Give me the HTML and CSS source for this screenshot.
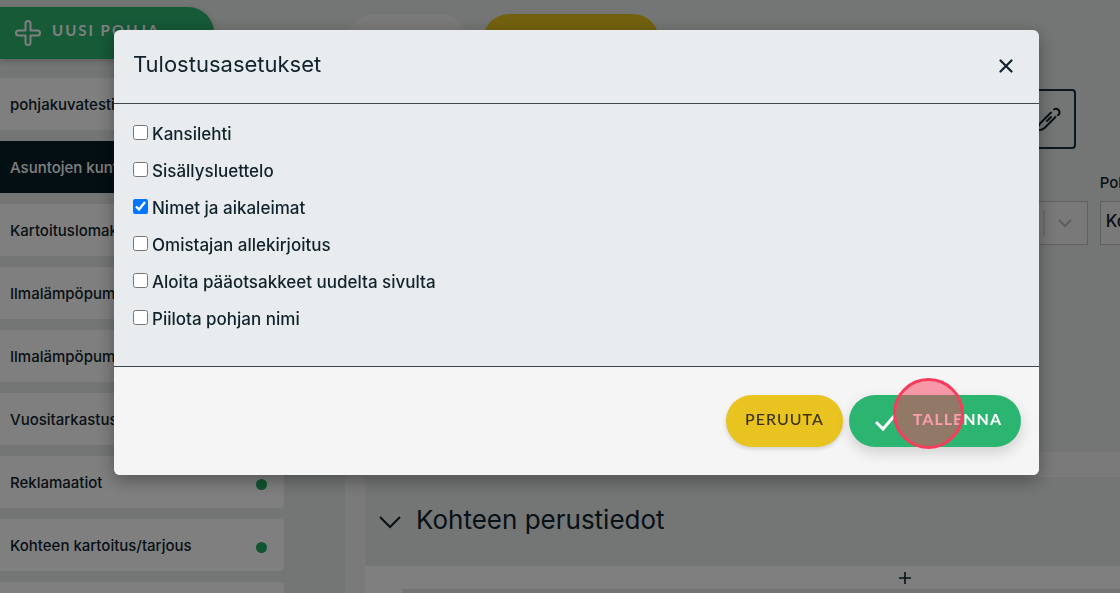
FILE: index.html
```html
<!DOCTYPE html>
<html lang="fi">
<head>
<meta charset="utf-8">
<meta name="viewport" content="width=device-width, initial-scale=1">
<title>Tulostusasetukset</title>
<link rel="stylesheet" href="styles.css">
</head>
<body>
<div class="app">
  <aside class="sidebar">
    <button class="new-button" type="button">
      <svg width="28" height="28" viewBox="0 0 28 28" fill="none" stroke="currentColor" stroke-width="2" stroke-linejoin="round"><path d="M11.500 4.500a2.500 2.500 0 0 1 5 0v7h7a2.500 2.500 0 0 1 0 5h-7v7a2.500 2.500 0 0 1-5 0v-7h-7a2.500 2.500 0 0 1 0-5h7z"/></svg>
      <span>UUSI POHJA</span>
    </button>
    <nav class="templates">
      <a class="template" href="#">pohjakuvatesti</a>
      <a class="template active" href="#">Asuntojen kunto</a>
      <a class="template" href="#">Kartoituslomake</a>
      <a class="template" href="#">Ilmalämpöpumppu</a>
      <a class="template" href="#">Ilmalämpöpumppu</a>
      <a class="template" href="#">Vuositarkastus</a>
      <a class="template" href="#">Reklamaatiot<span class="dot"></span></a>
      <a class="template" href="#">Kohteen kartoitus/tarjous<span class="dot"></span></a>
      <a class="template" href="#" aria-label="Pohja"></a>
    </nav>
  </aside>
  <main class="main">
    <div class="toolbar">
      <span class="pill pill-light"></span>
      <span class="pill pill-yellow"></span>
      <span class="status"></span>
    </div>
    <div class="actions">
      <button class="edit" type="button" aria-label="Muokkaa">
        <svg width="26" height="26" viewBox="0 0 26 26" fill="none" stroke="currentColor" stroke-width="2" stroke-linecap="round" stroke-linejoin="round"><path d="M15 6.500 4 17.500Q1.500 20 2 24q4 .5 6.500-2L19.500 11M15 11l-4 4M18 3.500c2-2.500 7 1 5 5l-1 .5"/></svg>
      </button>
    </div>
    <div class="fields">
      <div></div>
      <div class="field">
        <div class="label-space"></div>
        <div class="select-box"><select aria-label="Valinta"><option></option></select><svg class="chevron" width="44" height="42" viewBox="0 0 44 42" fill="none" stroke="currentColor"><path d="M1 8v26"/><path d="m16 18 6 6 6-6" stroke-width="2"/></svg></div>
      </div>
      <div class="field">
        <label for="template">Pohja</label>
        <div class="select-box"><select id="template"><option>Kohde</option></select></div>
      </div>
    </div>
    <div class="panel">
      <section class="section">
        <h2 class="section-head"><svg width="22" height="22" viewBox="0 0 22 22" fill="none" stroke="currentColor" stroke-width="2"><path d="m1 8 10 10L21 8"/></svg>Kohteen perustiedot</h2>
        <button class="add" type="button" aria-label="Lisää"><svg width="12" height="12" viewBox="0 0 12 12" stroke="currentColor" stroke-width="1.6"><path d="M6 0v12M0 6h12"/></svg></button>
        <div class="section-content"></div>
      </section>
    </div>
  </main>
</div>
<div class="backdrop">
  <form class="modal" role="dialog" aria-labelledby="dialog-title">
    <header class="modal-head">
      <h1 id="dialog-title">Tulostusasetukset</h1>
      <button class="close" type="button" aria-label="Sulje"><svg width="14" height="14" viewBox="0 0 14 14" stroke="currentColor" stroke-width="2.2" stroke-linecap="round"><path d="m1.500 1.500 11 11M12.500 1.500l-11 11"/></svg></button>
    </header>
    <div class="modal-body">
      <label><input type="checkbox">Kansilehti</label>
      <label><input type="checkbox">Sisällysluettelo</label>
      <label><input type="checkbox" checked>Nimet ja aikaleimat</label>
      <label><input type="checkbox">Omistajan allekirjoitus</label>
      <label><input type="checkbox">Aloita pääotsakkeet uudelta sivulta</label>
      <label><input type="checkbox">Piilota pohjan nimi</label>
    </div>
    <footer class="modal-foot">
      <button class="button cancel" type="button">PERUUTA</button>
      <button class="button save" type="button">
        <svg width="22" height="22" viewBox="0 0 22 22" fill="none" stroke="currentColor" stroke-width="3"><path d="m1 12 7 7L20 5"/></svg>
        <span>TALLENNA</span>
        <span class="click-marker"></span>
      </button>
    </footer>
  </form>
</div>
</body>
</html>
```
FILE: styles.css
```css
* { box-sizing: border-box; }
body {
  margin: 0;
  overflow: hidden;
  background: #e8ecec;
  color: #10222b;
  font-family: Inter, "Liberation Sans", sans-serif;
}
button, select { font: inherit; color: inherit; }
h1, h2 { margin: 0; font-weight: 400; }
svg { flex: none; }

.app { display: flex; gap: 61px; height: 100vh; overflow: hidden; }
.sidebar { flex: none; width: 284px; padding-top: 7px; }
.new-button {
  display: flex;
  align-items: center;
  gap: 10px;
  width: 214px;
  height: 52px;
  padding: 0 0 0 14px;
  border: 0;
  border-radius: 0 26px 26px 0;
  background: #2cb471;
  box-shadow: 0 2px 6px rgba(0, 0, 0, .2);
  color: #fff;
  font: 700 15px Lato, sans-serif;
  letter-spacing: 2px;
}
.new-button span { padding-bottom: 6px; }
.templates { display: grid; gap: 11px; margin-top: 19px; }
.template {
  display: flex;
  align-items: center;
  justify-content: space-between;
  height: 52px;
  padding: 0 17px 0 10px;
  border-radius: 0 4px 4px 0;
  background: #fff;
  color: inherit;
  font-size: 15px;
  font-weight: 500;
  text-decoration: none;
}
.template.active { background: #081e27; color: #fff; }
.dot { width: 11px; height: 11px; margin-top: 4px; border-radius: 50%; background: #22a860; }

.main { flex: 1; min-width: 0; margin-right: -335px; padding-top: 14px; }
.toolbar { display: flex; gap: 16px; padding-left: 3px; }
.pill { width: 119px; height: 52px; border-radius: 26px; background: #f4f4f4; }
.pill-yellow { width: 176px; background: #e9c31f; }
.status { width: 18px; height: 18px; margin: 16px 0 0 458px; border-radius: 50%; background: #22a860; }
.actions { display: flex; justify-content: flex-end; margin: 23px 379px 0 20px; }
.edit {
  display: grid;
  place-items: center;
  width: 60px;
  height: 60px;
  padding: 0 0 0 6px;
  border: 2px solid #15303d;
  border-radius: 4px;
  background: none;
}
.fields { display: grid; grid-template-columns: repeat(3, 1fr); gap: 12px; margin: 24px 0 0 20px; }
.label-space, .field label { display: block; height: 28px; font-size: 15px; font-weight: 500; line-height: 20px; }
.select-box { position: relative; }
.select-box select {
  width: 100%;
  height: 44px;
  padding: 0 5px 4px;
  appearance: none;
  border: 1px solid #bfc3c3;
  background: #f2f2f2;
  font-size: 17px;
  font-weight: 500;
}
.chevron { position: absolute; top: 1px; right: 1px; color: #b8bcbc; }
.panel { margin-top: 207px; padding: 25px 10px 0 20px; background: #f4f4f4; }
.section { background: #fff; }
.section-head {
  display: flex;
  align-items: center;
  gap: 15px;
  height: 89px;
  padding: 0 14px 4px;
  background: #e8ecec;
  font-size: 26px;
}
.add { display: grid; place-items: center; width: 100%; height: 23px; padding: 0; border: 0; background: none; }
.section-content { height: 80px; margin-left: 37px; background: #e8e8e8; }

.backdrop { position: fixed; inset: 0; padding: 30px 81px 0 114px; background: rgba(0, 0, 0, .5); }
.modal { border-radius: 6px; background: #e9ecee; box-shadow: 0 5px 18px rgba(0, 0, 0, .35); }
.modal-head {
  display: flex;
  align-items: center;
  justify-content: space-between;
  height: 74px;
  padding: 0 26px 6px 19px;
  border-bottom: 1px solid #3c494e;
}
.modal-head h1 { font-size: 22px; }
.close { display: grid; place-items: center; padding: 0; border: 0; background: none; margin-top: 5px; }
.modal-body { display: grid; justify-items: start; gap: 13px; padding: 18px 19px 35px; }
.modal-body label { display: flex; gap: 4px; font-size: 17px; font-weight: 500; line-height: 24px; }
.modal-body input { width: 15px; height: 15px; margin: 3px 0 0; }
.modal-foot {
  display: flex;
  justify-content: flex-end;
  gap: 6px;
  padding: 28px 18px;
  border-top: 1px solid #3c494e;
  border-radius: 0 0 6px 6px;
  background: #f5f5f5;
}
.button {
  display: flex;
  align-items: center;
  height: 52px;
  padding: 0 19px 6px;
  border: 0;
  border-radius: 26px;
  background: #e9c31f;
  box-shadow: 0 2px 4px rgba(0, 0, 0, .15);
  font: 500 16px Lato, sans-serif;
  letter-spacing: 1px;
}
.cancel { color: #3a3208; }
.save {
  position: relative;
  gap: 16px;
  padding-left: 26px;
  background: #2cb471;
  box-shadow: 0 6px 14px rgba(0, 0, 0, .15);
  color: #fff;
  font-weight: 700;
}
.save svg { margin-top: 6px; }
.click-marker {
  position: absolute;
  top: -17px;
  right: 57px;
  width: 71px;
  height: 71px;
  border: 3px solid #f83c5c;
  border-radius: 50%;
  background: rgba(248, 60, 92, .5);
}
```
